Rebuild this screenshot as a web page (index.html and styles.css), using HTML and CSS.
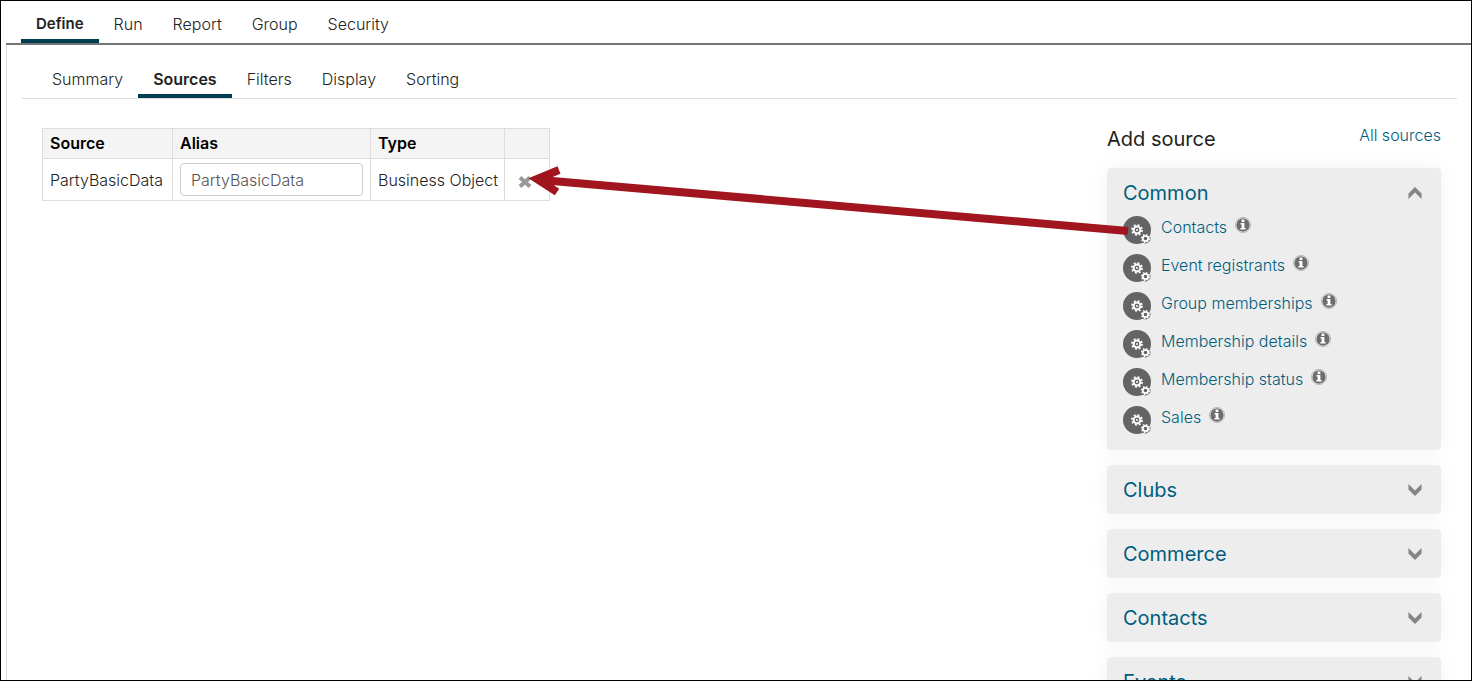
FILE: index.html
```html
<!DOCTYPE html>
<html lang="en">
<head>
  <meta charset="UTF-8">
  <meta name="viewport" content="width=device-width, initial-scale=1.0">
  <title>Sources</title>
  <link rel="stylesheet" href="styles.css">
</head>
<body>
  <!-- shared icons -->
  <svg class="sprite" aria-hidden="true">
    <symbol id="gears" viewBox="0 0 28 28">
      <circle cx="14" cy="14" r="14" fill="#636466"/>
      <circle cx="14" cy="14" r="3.4" fill="none" stroke="#fff" stroke-width="2"/>
      <circle cx="14" cy="14" r="5" fill="none" stroke="#fff" stroke-width="1.8" stroke-dasharray="1.96 1.96"/>
      <circle cx="14" cy="14" r="1" fill="#fff"/>
      <circle cx="22.5" cy="22.5" r="5" fill="#636466"/>
      <circle cx="22.5" cy="22.5" r="2.7" fill="none" stroke="#fff" stroke-width="1.8"/>
      <circle cx="22.5" cy="22.5" r="4" fill="none" stroke="#fff" stroke-width="1.2" stroke-dasharray="1.57 1.57"/>
    </symbol>
    <symbol id="info" viewBox="0 0 16 16">
      <circle cx="8" cy="8" r="7.6" fill="#fff" stroke="#aaa" stroke-width="0.8"/>
      <circle cx="8" cy="8" r="6.7" fill="#6d6d6d"/>
      <path d="M6.6 2.6h2.8v2.3H6.600zM5.600 6h3.800v5h1.200v1.600H5.400V11h1.200V7.500h-1z" fill="#fff"/>
    </symbol>
    <symbol id="chevron" viewBox="0 0 12 11">
      <path d="M0 0l6 6 6-6v5l-6 6-6-6z" fill="#858585"/>
    </symbol>
  </svg>

  <div class="page">
    <nav class="tabs main-tabs">
      <a href="#" class="tab active">Define</a>
      <a href="#" class="tab">Run</a>
      <a href="#" class="tab">Report</a>
      <a href="#" class="tab">Group</a>
      <a href="#" class="tab">Security</a>
    </nav>

    <div class="panel">
      <nav class="tabs sub-tabs">
        <a href="#" class="tab">Summary</a>
        <a href="#" class="tab active">Sources</a>
        <a href="#" class="tab">Filters</a>
        <a href="#" class="tab">Display</a>
        <a href="#" class="tab">Sorting</a>
      </nav>

      <div class="content">
        <main>
          <table class="sources">
            <thead>
              <tr>
                <th class="col-source">Source</th>
                <th class="col-alias"><label for="alias">Alias</label></th>
                <th class="col-type">Type</th>
                <th class="col-remove"></th>
              </tr>
            </thead>
            <tbody>
              <tr>
                <td>PartyBasicData</td>
                <td><input type="text" id="alias" class="alias" value="PartyBasicData"></td>
                <td>Business Object</td>
                <td class="remove-cell">
                  <button type="button" class="remove" aria-label="Remove">
                    <svg width="14" height="12" viewBox="0 0 14 12"><path d="M2 1.5l10 9M12 1.5l-10 9" stroke="#999" stroke-width="4"/></svg>
                  </button>
                </td>
              </tr>
            </tbody>
          </table>
        </main>

        <aside class="add-source">
          <div class="add-head">
            <h2>Add source</h2>
            <a href="#">All sources</a>
          </div>

          <section class="card">
            <button type="button" class="card-title" aria-expanded="true">Common <svg class="chevron up"><use href="#chevron"/></svg></button>
            <ul class="source-list">
              <li><svg class="gears"><use href="#gears"/></svg><a href="#">Contacts</a><svg class="info"><use href="#info"/></svg></li>
              <li><svg class="gears"><use href="#gears"/></svg><a href="#">Event registrants</a><svg class="info"><use href="#info"/></svg></li>
              <li><svg class="gears"><use href="#gears"/></svg><a href="#">Group memberships</a><svg class="info"><use href="#info"/></svg></li>
              <li><svg class="gears"><use href="#gears"/></svg><a href="#">Membership details</a><svg class="info"><use href="#info"/></svg></li>
              <li><svg class="gears"><use href="#gears"/></svg><a href="#">Membership status</a><svg class="info"><use href="#info"/></svg></li>
              <li><svg class="gears"><use href="#gears"/></svg><a href="#">Sales</a><svg class="info"><use href="#info"/></svg></li>
            </ul>
          </section>
          <section class="card">
            <button type="button" class="card-title">Clubs <svg class="chevron"><use href="#chevron"/></svg></button>
          </section>
          <section class="card">
            <button type="button" class="card-title">Commerce <svg class="chevron"><use href="#chevron"/></svg></button>
          </section>
          <section class="card">
            <button type="button" class="card-title">Contacts <svg class="chevron"><use href="#chevron"/></svg></button>
          </section>
          <section class="card">
            <button type="button" class="card-title">Events <svg class="chevron"><use href="#chevron"/></svg></button>
          </section>
        </aside>
      </div>
    </div>

    <!-- arrow from Contacts to the table row -->
    <svg class="arrow" width="604" height="72" viewBox="0 0 604 72" aria-hidden="true">
      <path d="M603 68L16 17M34 7L12 16l20 13" fill="none" stroke="#a0151e" stroke-width="8"/>
    </svg>
  </div>
</body>
</html>
```

FILE: styles.css
```css
* {
  box-sizing: border-box;
}

body {
  margin: 0;
  font-family: Inter, "Open Sans", sans-serif;
  font-size: 16px;
  font-weight: 300;
  line-height: 22px;
  color: #222;
  background: #fff;
}

a {
  color: #005e7d;
  text-decoration: none;
}

.sprite {
  display: none;
}

.page {
  position: relative;
  display: flex;
  flex-direction: column;
  height: 100vh;
  padding-left: 5px;
  border: 1px solid #000;
  overflow: hidden;
}

/* tabs */
.tabs {
  display: flex;
}

.tab {
  padding: 4px 15px;
  color: #222;
  border-bottom: 4px solid transparent;
}

.tab.active {
  font-weight: 600;
  border-bottom-color: #003e51;
}

.main-tabs {
  padding: 0 15px;
  border-bottom: 2px solid #767676;
}

.main-tabs .tab {
  padding: 12px 15px 4px;
}

.main-tabs .tab.active {
  font-size: 15px;
}

.panel {
  flex: 1;
  padding: 19px 14px 0 15px;
  border-left: 1px solid #ddd;
}

.sub-tabs {
  padding-left: 15px;
  border-bottom: 1px solid #ddd;
}

.content {
  display: flex;
  justify-content: space-between;
  align-items: flex-start;
  padding: 29px 16px 0 20px;
}

/* table */
.sources {
  border-collapse: collapse;
  table-layout: fixed;
  width: 508px;
}

.sources th,
.sources td {
  padding: 4px 7px;
  border: 1px solid #ddd;
  text-align: left;
  white-space: nowrap;
}

.sources th {
  padding-top: 3px;
  font-weight: 600;
  color: #000;
  background: #f4f4f4;
}

.col-source {
  width: 130px;
}

.col-alias {
  width: 198px;
}

.col-type {
  width: 134px;
}

.alias {
  display: block;
  width: 100%;
  height: 33px;
  padding: 0 10px;
  font: inherit;
  color: #555;
  border: 1px solid #ccc;
  border-radius: 4px;
}

.sources .remove-cell {
  padding: 4px 0 0 13px;
}

.remove {
  display: block;
  padding: 0;
  border: 0;
  background: none;
}

.remove svg {
  display: block;
}

/* add source */
.add-source {
  width: 334px;
}

.add-head {
  display: flex;
  justify-content: space-between;
  align-items: flex-start;
  height: 40px;
}

.add-head h2 {
  margin: 0;
  font-size: 20px;
  font-weight: 400;
}

.add-head a {
  line-height: 14px;
}

.card {
  margin-bottom: 15px;
  padding: 0 16px;
  background: #ededed;
  border-radius: 4px;
  box-shadow: 0 0 20px rgba(0, 0, 0, 0.05);
}

.card-title {
  display: flex;
  justify-content: space-between;
  align-items: center;
  width: 100%;
  height: 49px;
  padding: 0 3px 0 0;
  font: inherit;
  font-size: 20px;
  font-weight: 400;
  color: #005e7d;
  border: 0;
  background: none;
}

.chevron {
  width: 14px;
  height: 12px;
}

.chevron.up {
  transform: rotate(180deg);
}

.source-list {
  margin: -1px 0 0;
  padding: 0 0 6px;
  list-style: none;
}

.source-list li {
  display: flex;
  align-items: flex-start;
  height: 38px;
}

.source-list a {
  margin: 0 8px 0 10px;
}

.gears {
  width: 28px;
  height: 28px;
}

.info {
  width: 16px;
  height: 16px;
  margin-top: 1px;
}

.arrow {
  position: absolute;
  top: 162px;
  left: 524px;
}
```
